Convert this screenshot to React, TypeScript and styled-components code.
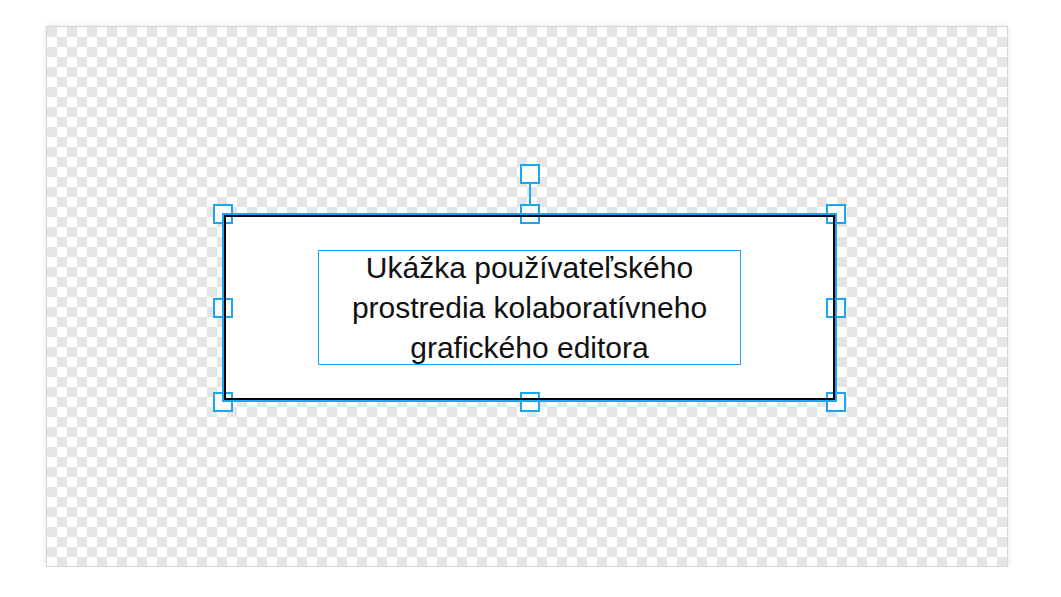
import React from 'react';
import styled, { createGlobalStyle } from 'styled-components';

const BLUE = '#1aa7f0';

const GlobalStyle = createGlobalStyle`
  html, body {
    margin: 0;
    background: #ffffff;
  }
  body {
    font-family: "Liberation Sans", Arial, sans-serif;
  }
`;

const Page = styled.div`
  padding: 26px 0 0 46px;
`;

const Canvas = styled.div`
  position: relative;
  box-sizing: border-box;
  width: 962px;
  height: 541px;
  border: 1px solid #d6d6d6;
  box-shadow: 0 0 5px rgba(0, 0, 0, 0.12);
  background-color: #ffffff;
  background-image: conic-gradient(
    #ffffff 0 25%,
    #e5e5e5 0 50%,
    #ffffff 0 75%,
    #e5e5e5 0
  );
  background-size: 20px 20px;
  overflow: hidden;
`;

// selected shape, placed on the free canvas
const Selection = styled.div`
  position: absolute;
  left: 175px;
  top: 186px;
  width: 615px;
  height: 189px;
`;

const Body = styled.div`
  box-sizing: border-box;
  width: 100%;
  height: 100%;
  background: #ffffff;
  display: flex;
  align-items: center;
  justify-content: center;
`;

const TextBox = styled.div`
  box-sizing: border-box;
  width: 423px;
  height: 115px;
  border: 1px solid ${BLUE};
  display: flex;
  align-items: center;
  justify-content: center;
  text-align: center;
  font-size: 30px;
  line-height: 40px;
  color: #111111;
  white-space: nowrap;
`;

const Outline = styled.div`
  position: absolute;
  inset: 0;
  border: 2px solid ${BLUE};
  pointer-events: none;
`;

const Stroke = styled.div`
  box-sizing: border-box;
  width: 100%;
  height: 100%;
  border: 2px solid #000000;
`;

const Handle = styled.div<{ $x: number; $y: number }>`
  position: absolute;
  box-sizing: border-box;
  width: 20px;
  height: 20px;
  left: ${(p) => p.$x}px;
  top: ${(p) => p.$y}px;
  transform: translate(-50%, -50%);
  border: 2px solid ${BLUE};
  background: #ffffff;
`;

const Stem = styled.div`
  position: absolute;
  left: 306.5px;
  top: -39px;
  width: 2px;
  height: 40px;
  background: ${BLUE};
`;

const W = 615;
const H = 189;

const handles = [
  { x: 1, y: 1 },
  { x: W / 2, y: 1 },
  { x: W - 1, y: 1 },
  { x: 1, y: H / 2 },
  { x: W - 1, y: H / 2 },
  { x: 1, y: H },
  { x: W / 2, y: H },
  { x: W - 1, y: H },
  { x: W / 2, y: -39 },
];

export default function App() {
  return (
    <>
      <GlobalStyle />
      <Page>
        <Canvas>
          <Selection>
            <Body>
              <TextBox>
                <div>
                  Ukážka používateľského
                  <br />
                  prostredia kolaboratívneho
                  <br />
                  grafického editora
                </div>
              </TextBox>
            </Body>
            <Stem />
            {handles.map((h, i) => (
              <Handle key={i} $x={h.x} $y={h.y} />
            ))}
            <Outline>
              <Stroke />
            </Outline>
          </Selection>
        </Canvas>
      </Page>
    </>
  );
}
